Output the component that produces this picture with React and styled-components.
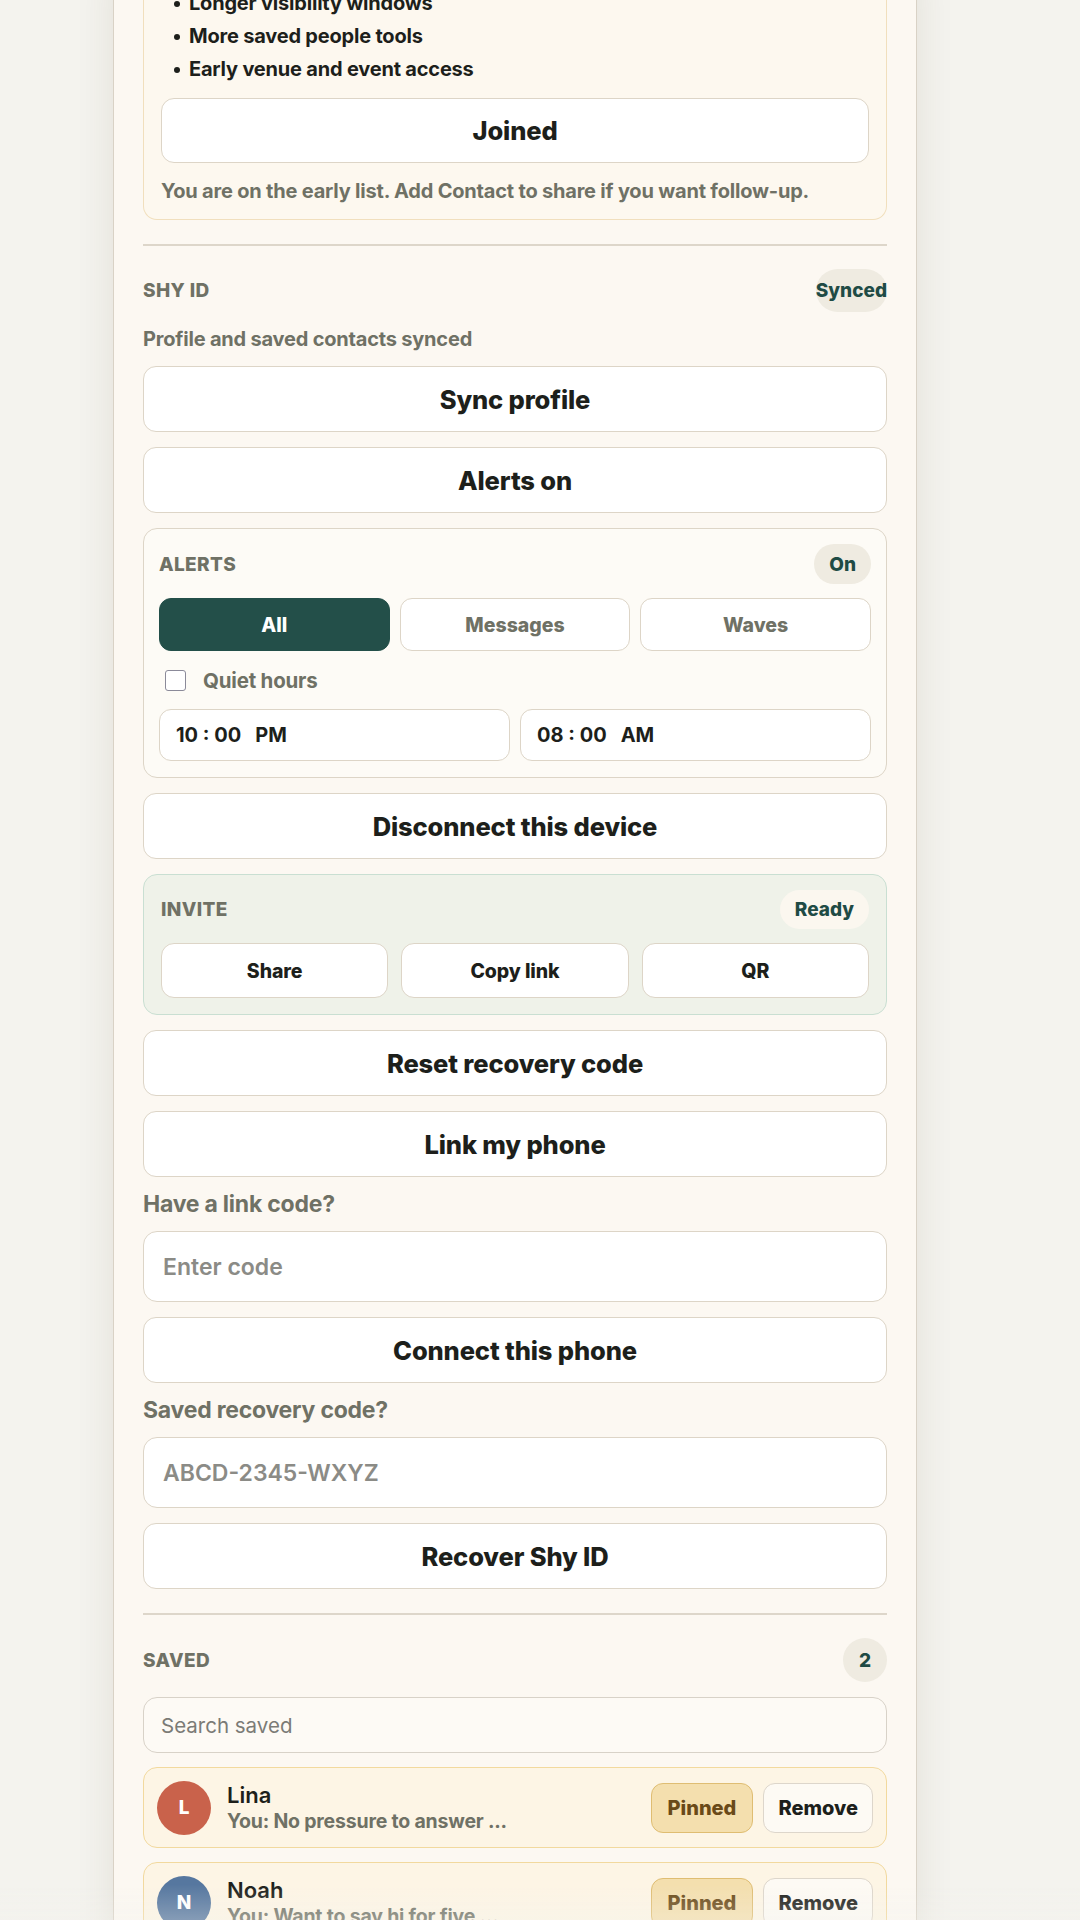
import styled, { createGlobalStyle } from "styled-components";

const GlobalStyle = createGlobalStyle`
  html, body {
    margin: 0;
    padding: 0;
    background: #f4f3ee;
    font-family: Inter, "Noto Sans", "Liberation Sans", sans-serif;
    color: #1d1f1b;
  }
  * {
    box-sizing: border-box;
  }
`;

const Page = styled.div`
  min-height: 100vh;
  overflow: hidden;
  padding-left: 113px;
`;

const Panel = styled.main`
  width: 804px;
  margin-top: -29px;
  min-height: 2000px;
  padding: 0 29px 40px;
  background: #fcf8f2;
  border-left: 1px solid #d9d2c6;
  border-right: 1px solid #d9d2c6;
  box-shadow: 0 0 36px rgba(70, 60, 40, 0.1);
  display: flex;
  flex-direction: column;
  gap: 15px;
`;

const UpgradeCard = styled.section`
  background: #fdf8ef;
  border: 1px solid #f1dfbd;
  border-top: none;
  border-radius: 0 0 14px 14px;
  padding: 16px 17px 16px;
  display: flex;
  flex-direction: column;
`;

const Perks = styled.ul`
  margin: 0 0 12px;
  padding: 0 0 0 28px;
  list-style: none;
`;

const Perk = styled.li`
  position: relative;
  font-size: 20px;
  font-weight: 700;
  letter-spacing: -0.01em;
  line-height: 33px;
  color: #1d1f1b;

  &::before {
    content: "";
    position: absolute;
    left: -15px;
    top: 14px;
    width: 6px;
    height: 6px;
    border-radius: 50%;
    background: #1d1f1b;
  }
`;

const Note = styled.p`
  margin: 16px 0 0;
  font-size: 20px;
  font-weight: 700;
  letter-spacing: -0.01em;
  line-height: 24px;
  color: #6f7165;
`;

const Button = styled.button`
  display: flex;
  align-items: center;
  justify-content: center;
  width: 100%;
  height: ${(p) => p.$h || 66}px;
  border: 1.5px solid #ddd5c7;
  border-radius: 13px;
  background: #ffffff;
  font-family: inherit;
  font-size: ${(p) => p.$size || 25.5}px;
  font-weight: 800;
  letter-spacing: -0.005em;
  color: #1d1f1b;
  cursor: pointer;
`;

const Divider = styled.hr`
  margin: 9px 0 8px;
  border: none;
  border-top: 2px solid #ddd6ca;
`;

const HeadRow = styled.div`
  display: flex;
  align-items: center;
  justify-content: space-between;
`;

const Label = styled.span`
  font-size: 19px;
  font-weight: 800;
  letter-spacing: 0.02em;
  text-transform: uppercase;
  color: #6f7165;
`;

const Pill = styled.span`
  display: inline-flex;
  align-items: center;
  justify-content: center;
  height: ${(p) => p.$h || 40}px;
  min-width: ${(p) => p.$h || 40}px;
  padding: 0 ${(p) => (p.$pad === undefined ? 15 : p.$pad)}px;
  border-radius: 999px;
  background: ${(p) => p.$bg || "#efebe1"};
  font-size: 19px;
  font-weight: 800;
  color: #1f4b45;
`;

const Muted = styled.p`
  margin: 0;
  font-size: ${(p) => p.$size || 20}px;
  font-weight: 700;
  letter-spacing: -0.01em;
  line-height: 24px;
  color: #6f7165;
`;

const SubCard = styled.section`
  border: 1.5px solid ${(p) => p.$border};
  background: ${(p) => p.$bg};
  border-radius: 14px;
  padding: 15px ${(p) => p.$px}px 16px;
  display: flex;
  flex-direction: column;
  gap: 14px;
`;

const Grid3 = styled.div`
  display: grid;
  grid-template-columns: repeat(3, 1fr);
  gap: ${(p) => p.$gap}px;
`;

const Segment = styled.button`
  height: 53px;
  border-radius: 12px;
  border: 1.5px solid ${(p) => (p.$active ? "#234f49" : "#ddd5c7")};
  background: ${(p) => (p.$active ? "#234f49" : "#ffffff")};
  color: ${(p) => (p.$active ? "#ffffff" : "#6f7165")};
  font-family: inherit;
  font-size: 19.5px;
  font-weight: 800;
`;

const CheckRow = styled.label`
  display: flex;
  align-items: center;
  gap: 17px;
  height: 30px;
  padding-left: 6px;
  font-size: 20.5px;
  font-weight: 700;
  letter-spacing: -0.01em;
  color: #6f7165;
`;

const Box = styled.span`
  width: 21px;
  height: 21px;
  border: 1.5px solid #8b8a99;
  border-radius: 3px;
  background: #ffffff;
`;

const TimeGrid = styled.div`
  display: grid;
  grid-template-columns: 1fr 1fr;
  gap: 10px;
`;

const TimeField = styled.div`
  display: flex;
  align-items: center;
  gap: 14px;
  height: 52px;
  padding: 0 16px;
  border: 1.5px solid #ddd5c7;
  border-radius: 12px;
  background: #ffffff;
  font-size: 20px;
  font-weight: 700;
  color: #1d1f1b;
`;

const Field = styled.input`
  width: 100%;
  height: ${(p) => p.$h || 71}px;
  padding: 0 ${(p) => p.$px || 19}px;
  border: 1.5px solid ${(p) => p.$border || "#ddd5c7"};
  border-radius: 14px;
  background: ${(p) => p.$bg || "#ffffff"};
  font-family: inherit;
  font-size: ${(p) => p.$size || 23}px;
  font-weight: ${(p) => p.$weight || 600};
  outline: none;

  &::placeholder {
    color: ${(p) => p.$ph || "#8b8b86"};
  }
`;

const SavedList = styled.div`
  display: flex;
  flex-direction: column;
  gap: 14px;
  margin-top: -1px;
`;

const ContactRow = styled.div`
  display: flex;
  align-items: center;
  height: 81px;
  padding: 0 13px;
  border: 1.5px solid #f2d99e;
  border-radius: 14px;
  background: #fdf5e5;
`;

const Avatar = styled.div`
  flex: none;
  width: 54px;
  height: 54px;
  border-radius: 50%;
  background: ${(p) => p.$color};
  display: flex;
  align-items: center;
  justify-content: center;
  color: #ffffff;
  font-size: 19px;
  font-weight: 800;
`;

const ContactText = styled.div`
  flex: 1;
  min-width: 0;
  margin-left: 16px;
  display: flex;
  flex-direction: column;
`;

const Name = styled.span`
  font-size: 22px;
  font-weight: 600;
  line-height: 27px;
  color: #1d1f1b;
`;

const Preview = styled.span`
  font-size: 19.5px;
  font-weight: 700;
  letter-spacing: -0.01em;
  line-height: 24px;
  color: #6f7165;
  white-space: nowrap;
`;

const SmallButton = styled.button`
  height: 50px;
  padding: 0 ${(p) => (p.$pinned ? 16 : 14)}px;
  margin-left: 10px;
  border-radius: 12px;
  border: 1.5px solid ${(p) => (p.$pinned ? "#dfbd72" : "#ddd6cb")};
  background: ${(p) => (p.$pinned ? "#f4dfae" : "#fdfaf4")};
  color: ${(p) => (p.$pinned ? "#6a4a18" : "#1d1f1b")};
  font-family: inherit;
  font-size: 20px;
  font-weight: 800;
`;

// soft fade where the list scrolls under the bottom edge
const BottomFade = styled.div`
  position: fixed;
  left: 0;
  right: 0;
  bottom: 0;
  height: 36px;
  pointer-events: none;
  background: linear-gradient(rgba(244, 243, 238, 0), rgba(244, 243, 238, 0.3));
`;

const perks = [
  "Longer visibility windows",
  "More saved people tools",
  "Early venue and event access",
];

const saved = [
  { id: 1, name: "Lina", last: "You: No pressure to answer ...", color: "#c9624b" },
  { id: 2, name: "Noah", last: "You: Want to say hi for five ...", color: "#56779f" },
];

const App = () => {
  return (
    <Page>
      <GlobalStyle />
      <Panel>
        <UpgradeCard>
          <Perks>
            {perks.map((p) => (
              <Perk key={p}>{p}</Perk>
            ))}
          </Perks>
          <Button $h={65}>Joined</Button>
          <Note>You are on the early list. Add Contact to share if you want follow-up.</Note>
        </UpgradeCard>

        <Divider />

        <HeadRow>
          <Label>Shy ID</Label>
          <Pill $h={43} $pad={0}>Synced</Pill>
        </HeadRow>
        <Muted>Profile and saved contacts synced</Muted>
        <Button>Sync profile</Button>
        <Button>Alerts on</Button>

        <SubCard $bg="#fdfbf6" $border="#ddd5c7" $px={15}>
          <HeadRow>
            <Label>Alerts</Label>
            <Pill>On</Pill>
          </HeadRow>
          <Grid3 $gap={10}>
            <Segment $active>All</Segment>
            <Segment>Messages</Segment>
            <Segment>Waves</Segment>
          </Grid3>
          <CheckRow>
            <Box />
            Quiet hours
          </CheckRow>
          <TimeGrid>
            <TimeField>
              <span>10 : 00</span>
              <span>PM</span>
            </TimeField>
            <TimeField>
              <span>08 : 00</span>
              <span>AM</span>
            </TimeField>
          </TimeGrid>
        </SubCard>

        <Button>Disconnect this device</Button>

        <SubCard $bg="#eff2e9" $border="#c9dfd2" $px={17}>
          <HeadRow>
            <Label>Invite</Label>
            <Pill $bg="#fbf7ef" $h={39}>Ready</Pill>
          </HeadRow>
          <Grid3 $gap={13}>
            <Button $h={55} $size={19.5}>Share</Button>
            <Button $h={55} $size={19.5}>Copy link</Button>
            <Button $h={55} $size={19.5}>QR</Button>
          </Grid3>
        </SubCard>

        <Button>Reset recovery code</Button>
        <Button>Link my phone</Button>
        <Muted $size={23}>Have a link code?</Muted>
        <Field placeholder="Enter code" />
        <Button>Connect this phone</Button>
        <Muted $size={23}>Saved recovery code?</Muted>
        <Field placeholder="ABCD-2345-WXYZ" />
        <Button>Recover Shy ID</Button>

        <Divider />

        <HeadRow>
          <Label>Saved</Label>
          <Pill $h={44} $pad={0}>2</Pill>
        </HeadRow>
        <Field
          placeholder="Search saved"
          $h={56}
          $px={17}
          $size={20.5}
          $weight={400}
          $bg="#fdfaf5"
          $border="#d8d2c8"
          $ph="#7b7b76"
        />
        <SavedList>
          {saved.map((c) => (
            <ContactRow key={c.id}>
              <Avatar $color={c.color}>{c.name[0]}</Avatar>
              <ContactText>
                <Name>{c.name}</Name>
                <Preview>{c.last}</Preview>
              </ContactText>
              <SmallButton $pinned>Pinned</SmallButton>
              <SmallButton>Remove</SmallButton>
            </ContactRow>
          ))}
        </SavedList>
      </Panel>
      <BottomFade />
    </Page>
  );
};

export default App;
